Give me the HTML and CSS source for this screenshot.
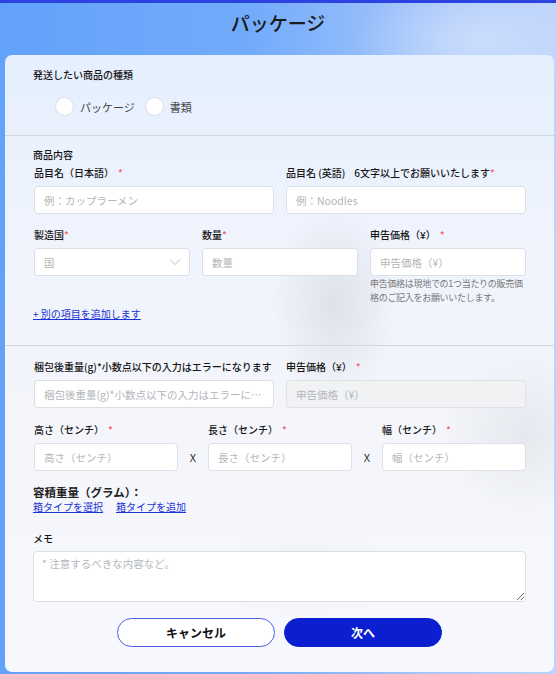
FILE: index.html
```html
<!DOCTYPE html>
<html lang="ja">
<head>
<meta charset="utf-8">
<title>パッケージ</title>
<link rel="stylesheet" href="styles.css">
</head>
<body>
<div class="topbar"></div>
<header class="header"><h1 class="title">パッケージ</h1></header>
<main class="card">
  <section class="sec sec-type">
    <div class="label">発送したい商品の種類</div>
    <div class="radios">
      <label class="radio"><span class="circle"></span><span>パッケージ</span></label>
      <label class="radio"><span class="circle"></span><span>書類</span></label>
    </div>
  </section>
  <section class="sec sec-items">
    <div class="label">商品内容</div>
    <div class="grid2">
      <div class="field">
        <div class="label">品目名（日本語）<span class="req req-sp">*</span></div>
        <input class="input" placeholder="例：カップラーメン">
      </div>
      <div class="field">
        <div class="label">品目名 (英語)&nbsp;&nbsp;&nbsp; 6文字以上でお願いいたします<span class="req">*</span></div>
        <input class="input" placeholder="例：Noodles">
      </div>
    </div>
    <div class="grid3">
      <div class="field">
        <div class="label">製造国<span class="req">*</span></div>
        <div class="select"><span class="ph">国</span>
          <svg class="chev" width="12" height="8" viewBox="0 0 12 8"><path d="M1 1.5 L6 6.5 L11 1.5" fill="none" stroke="#b8bcc4" stroke-width="1"/></svg>
        </div>
      </div>
      <div class="field">
        <div class="label">数量<span class="req">*</span></div>
        <input class="input" placeholder="数量">
      </div>
      <div class="field">
        <div class="label">申告価格（¥）<span class="req req-sp">*</span></div>
        <input class="input" placeholder="申告価格（¥）">
        <p class="hint">申告価格は現地での1つ当たりの販売価格のご記入をお願いいたします。</p>
      </div>
    </div>
    <a class="link add-link" href="#">+ 別の項目を追加します</a>
  </section>
  <section class="sec sec-pack">
    <div class="grid2">
      <div class="field">
        <div class="label">梱包後重量(g)*小数点以下の入力はエラーになります</div>
        <input class="input" placeholder="梱包後重量(g)*小数点以下の入力はエラーになります">
      </div>
      <div class="field">
        <div class="label">申告価格（¥）<span class="req req-sp">*</span></div>
        <input class="input disabled" placeholder="申告価格（¥）" disabled>
      </div>
    </div>
    <div class="dims">
      <div class="field">
        <div class="label">高さ（センチ）<span class="req req-sp">*</span></div>
        <input class="input" placeholder="高さ（センチ）">
      </div>
      <span class="x">X</span>
      <div class="field">
        <div class="label">長さ（センチ）<span class="req req-sp">*</span></div>
        <input class="input" placeholder="長さ（センチ）">
      </div>
      <span class="x">X</span>
      <div class="field">
        <div class="label">幅（センチ）<span class="req req-sp">*</span></div>
        <input class="input" placeholder="幅（センチ）">
      </div>
    </div>
    <div class="vol">容積重量（グラム）：</div>
    <div class="links">
      <a class="link" href="#">箱タイプを選択</a>
      <a class="link" href="#">箱タイプを追加</a>
    </div>
    <div class="label memo-label">メモ</div>
    <textarea class="memo" placeholder="* 注意するべきな内容など。"></textarea>
    <div class="buttons">
      <button class="btn btn-cancel">キャンセル</button>
      <button class="btn btn-next">次へ</button>
    </div>
  </section>
</main>
</body>
</html>
```

FILE: styles.css
```css
* { box-sizing: border-box; }
html, body { margin: 0; padding: 0; }
body {
  width: 556px;
  height: 674px;
  overflow: hidden;
  font-family: "Noto Sans CJK JP", "Noto Sans", sans-serif;
  color: #222;
  background:
    radial-gradient(ellipse 180px 90px at 480px 40px, rgba(215,228,252,0.7), rgba(215,228,252,0) 70%),
    linear-gradient(90deg, #62a2fb 0%, #72abfb 45%, #a9c8fb 80%, #bcd3fb 100%);
}
.topbar { height: 3px; background: #2c43e2; }
.header { height: 52px; display: flex; justify-content: center; }
.title {
  margin: 7px 0 0;
  font-size: 19px;
  font-weight: 500;
  line-height: 26px;
  color: #1a1a1a;
}
.card {
  margin: 0 2px 0 5px;
  height: 617px;
  border-radius: 7px;
  background:
    radial-gradient(ellipse 90px 140px at 330px 250px, rgba(200,203,210,0.45), rgba(200,203,210,0) 70%),
    radial-gradient(ellipse 120px 120px at 520px 380px, rgba(205,208,214,0.35), rgba(205,208,214,0) 70%),
    radial-gradient(ellipse 160px 60px at 300px 520px, rgba(210,212,218,0.35), rgba(210,212,218,0) 70%),
    linear-gradient(180deg, #e5effe 0%, #eef3fd 25%, #f3f5fb 55%, #f8f9fe 100%);
  overflow: hidden;
}
.sec { padding: 0 28px 0 28px; }
.sec + .sec { border-top: 1px solid #d3d6dd; }
.label {
  font-size: 10px;
  line-height: 14px;
  font-weight: 500;
  color: #161616;
  white-space: nowrap;
}
.req { color: #f25c5c; }
.req-sp { margin-left: 4px; }
.sec-type { padding-top: 13px; height: 80px; }
.radios { display: flex; gap: 10px; margin-top: 15px; padding-left: 22px; }
.radio { display: flex; align-items: center; gap: 6px; font-size: 11px; color: #444; }
.circle {
  width: 19px; height: 19px; border-radius: 50%;
  background: #fff; border: 1px solid #dcdfe6;
}
.sec-items { padding-top: 12px; height: 210px; }
.grid2 {
  display: grid;
  grid-template-columns: 1fr 1fr;
  gap: 12px;
  margin-top: 4px;
  padding-left: 1px;
}
.field { display: flex; flex-direction: column; gap: 6px; min-width: 0; }
.input {
  display: block;
  width: 100%;
  height: 28px;
  border: 1px solid #dcdfe6;
  border-radius: 4px;
  background: #fff;
  font-family: inherit;
  font-size: 10.5px;
  padding: 0 9px;
  color: #333;
  outline: none;
  text-overflow: ellipsis;
}
.input::placeholder { color: #b4b6bb; }
.input.disabled { background: #f1f2f4; border-color: #dfe1e5; }
.grid3 {
  display: grid;
  grid-template-columns: 156px 156px 156px;
  justify-content: space-between;
  margin-top: 14px;
  padding-left: 1px;
}
.select {
  height: 28px;
  border: 1px solid #dcdfe6;
  border-radius: 4px;
  background: #fff;
  display: flex;
  align-items: center;
  justify-content: space-between;
  padding: 0 8px 0 9px;
}
.ph { font-size: 10.5px; color: #b4b6bb; }
.hint {
  margin: -5px 0 0;
  font-size: 9px;
  line-height: 14px;
  letter-spacing: -0.3px;
  color: #777;
}
.link {
  font-size: 10px;
  line-height: 14px;
  color: #1a33d4;
  text-decoration: underline;
}
.add-link { display: block; width: max-content; margin-top: 2px; }
.sec-pack { padding-top: 14px; }
.sec-pack .grid2 { margin-top: 0; }
.dims {
  display: grid;
  grid-template-columns: 1fr 30px 1fr 30px 1fr;
  align-items: end;
  margin-top: 15px;
  padding-left: 1px;
}
.x { font-size: 11px; color: #333; text-align: center; line-height: 28px; }
.vol {
  margin-top: 13px;
  font-size: 11.5px;
  line-height: 16px;
  font-weight: 700;
  white-space: nowrap;
}
.links { display: flex; gap: 13px; margin-top: 0; }
.memo-label { margin-top: 18px; }
.memo {
  display: block;
  width: 493px;
  height: 51px;
  margin-top: 5px;
  border: 1px solid #dcdfe6;
  border-radius: 4px;
  background: #fff;
  font-family: inherit;
  font-size: 10.5px;
  padding: 4px 8px;
  resize: vertical;
  outline: none;
}
.memo::placeholder { color: #b4b6bb; }
.buttons {
  display: flex;
  justify-content: center;
  gap: 9px;
  margin-top: 16px;
  margin-left: -28px;
  margin-right: -28px;
}
.btn {
  width: 158px;
  height: 29px;
  border-radius: 15px;
  font-family: inherit;
  font-size: 12px;
  font-weight: 700;
  cursor: pointer;
}
.btn-cancel { background: #fff; border: 1px solid #4a5ee3; color: #111; }
.btn-next { background: #0b1fd0; border: 1px solid #0b1fd0; color: #fff; }
```
